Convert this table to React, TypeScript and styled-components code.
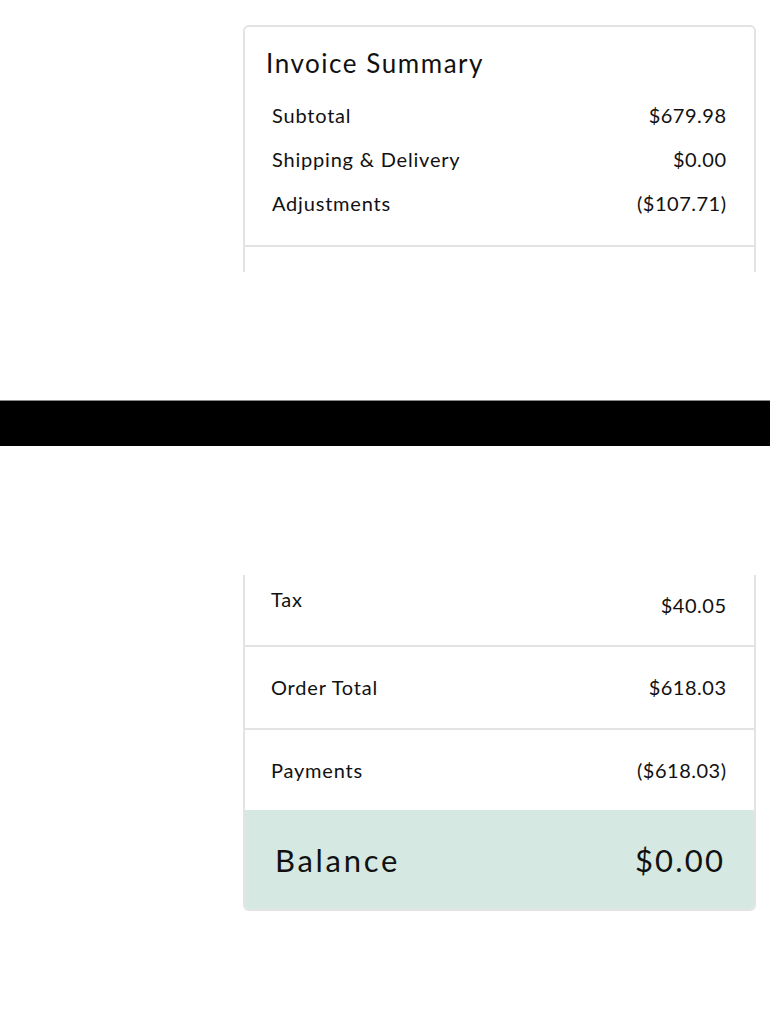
import React from "react";
import styled, { createGlobalStyle } from "styled-components";

const Global = createGlobalStyle`
  html, body { margin: 0; padding: 0; background: #ffffff; }
  body { font-family: "Lato", "Noto Sans", sans-serif; color: #111111; }
`;

const Page = styled.div`
  width: 770px;
  display: flex;
  flex-direction: column;
`;

const Shot = styled.div<{ $height: number; $top: number }>`
  height: ${(p) => p.$height}px;
  padding-top: ${(p) => p.$top}px;
  padding-left: 243px;
  box-sizing: border-box;
  overflow: hidden;
`;

const Card = styled.div<{ $cut?: "top" | "bottom" }>`
  width: 513px;
  box-sizing: border-box;
  border: 2px solid #e3e3e3;
  border-radius: 6px;
  background: #ffffff;
  overflow: hidden;
  ${(p) => (p.$cut === "top" ? "border-top: none; border-top-left-radius: 0; border-top-right-radius: 0;" : "")}
  ${(p) => (p.$cut === "bottom" ? "border-bottom: none; border-bottom-left-radius: 0; border-bottom-right-radius: 0;" : "")}
`;

const Header = styled.div`
  padding: 21px 27px 20px 21px;
  border-bottom: 2px solid #e3e3e3;
`;

const Title = styled.h2`
  margin: 0 0 15px 0;
  font-size: 26px;
  line-height: 30px;
  font-weight: 400;
  letter-spacing: 1.55px;
`;

const Row = styled.div<{ $lh?: number }>`
  display: flex;
  justify-content: space-between;
  align-items: flex-start;
  font-size: 20px;
  letter-spacing: 0.8px;
  line-height: ${(p) => p.$lh ?? 44}px;
  padding-left: 6px;
`;

const Section = styled.div<{ $pt: number; $pb: number; $last?: boolean }>`
  padding: ${(p) => p.$pt}px 27px ${(p) => p.$pb}px 20px;
  border-bottom: ${(p) => (p.$last ? "none" : "2px solid #e3e3e3")};
`;

const Label = styled.span``;

const Value = styled.span<{ $drop?: number }>`
  margin-top: ${(p) => p.$drop ?? 0}px;
  margin-right: 0.5px;
  letter-spacing: 0.5px;
`;

const BalanceBar = styled.div`
  display: flex;
  justify-content: space-between;
  background: #d5e9e2;
  padding: 32px 31px 31px 30px;
  font-size: 31px;
  line-height: 36px;
  letter-spacing: 2.7px;
`;

const BalanceValue = styled.span`
  margin-right: -2.2px;
  letter-spacing: 2.2px;
`;

const Blackout = styled.div`
  height: 46px;
  margin-top: 128px;
  margin-bottom: 129px;
  background: #000000;
  border-top: 1px solid #8a8a8a;
  box-sizing: border-box;
`;

const topRows = [
  ["Subtotal", "$679.98"],
  ["Shipping & Delivery", "$0.00"],
  ["Adjustments", "($107.71)"],
];

export default function App() {
  return (
    <Page>
      <Global />
      <Shot $height={272} $top={25}>
        <Card $cut="bottom">
          <Header>
            <Title>Invoice Summary</Title>
            {topRows.map(([l, v]) => (
              <Row key={l}>
                <Label>{l}</Label>
                <Value>{v}</Value>
              </Row>
            ))}
          </Header>
          <Section $pt={29} $pb={29} $last>
            <Row $lh={23}>
              <Label>&nbsp;</Label>
            </Row>
          </Section>
        </Card>
      </Shot>
      <Blackout />
      <Shot $height={449} $top={0}>
        <Card $cut="top">
          <Section $pt={13} $pb={28}>
            <Row $lh={23}>
              <Label>Tax</Label>
              <Value $drop={6}>$40.05</Value>
            </Row>
          </Section>
          <Section $pt={29} $pb={29}>
            <Row $lh={23}>
              <Label>Order Total</Label>
              <Value>$618.03</Value>
            </Row>
          </Section>
          <Section $pt={29} $pb={28} $last>
            <Row $lh={23}>
              <Label>Payments</Label>
              <Value>($618.03)</Value>
            </Row>
          </Section>
          <BalanceBar>
            <span>Balance</span>
            <BalanceValue>$0.00</BalanceValue>
          </BalanceBar>
        </Card>
      </Shot>
    </Page>
  );
}
